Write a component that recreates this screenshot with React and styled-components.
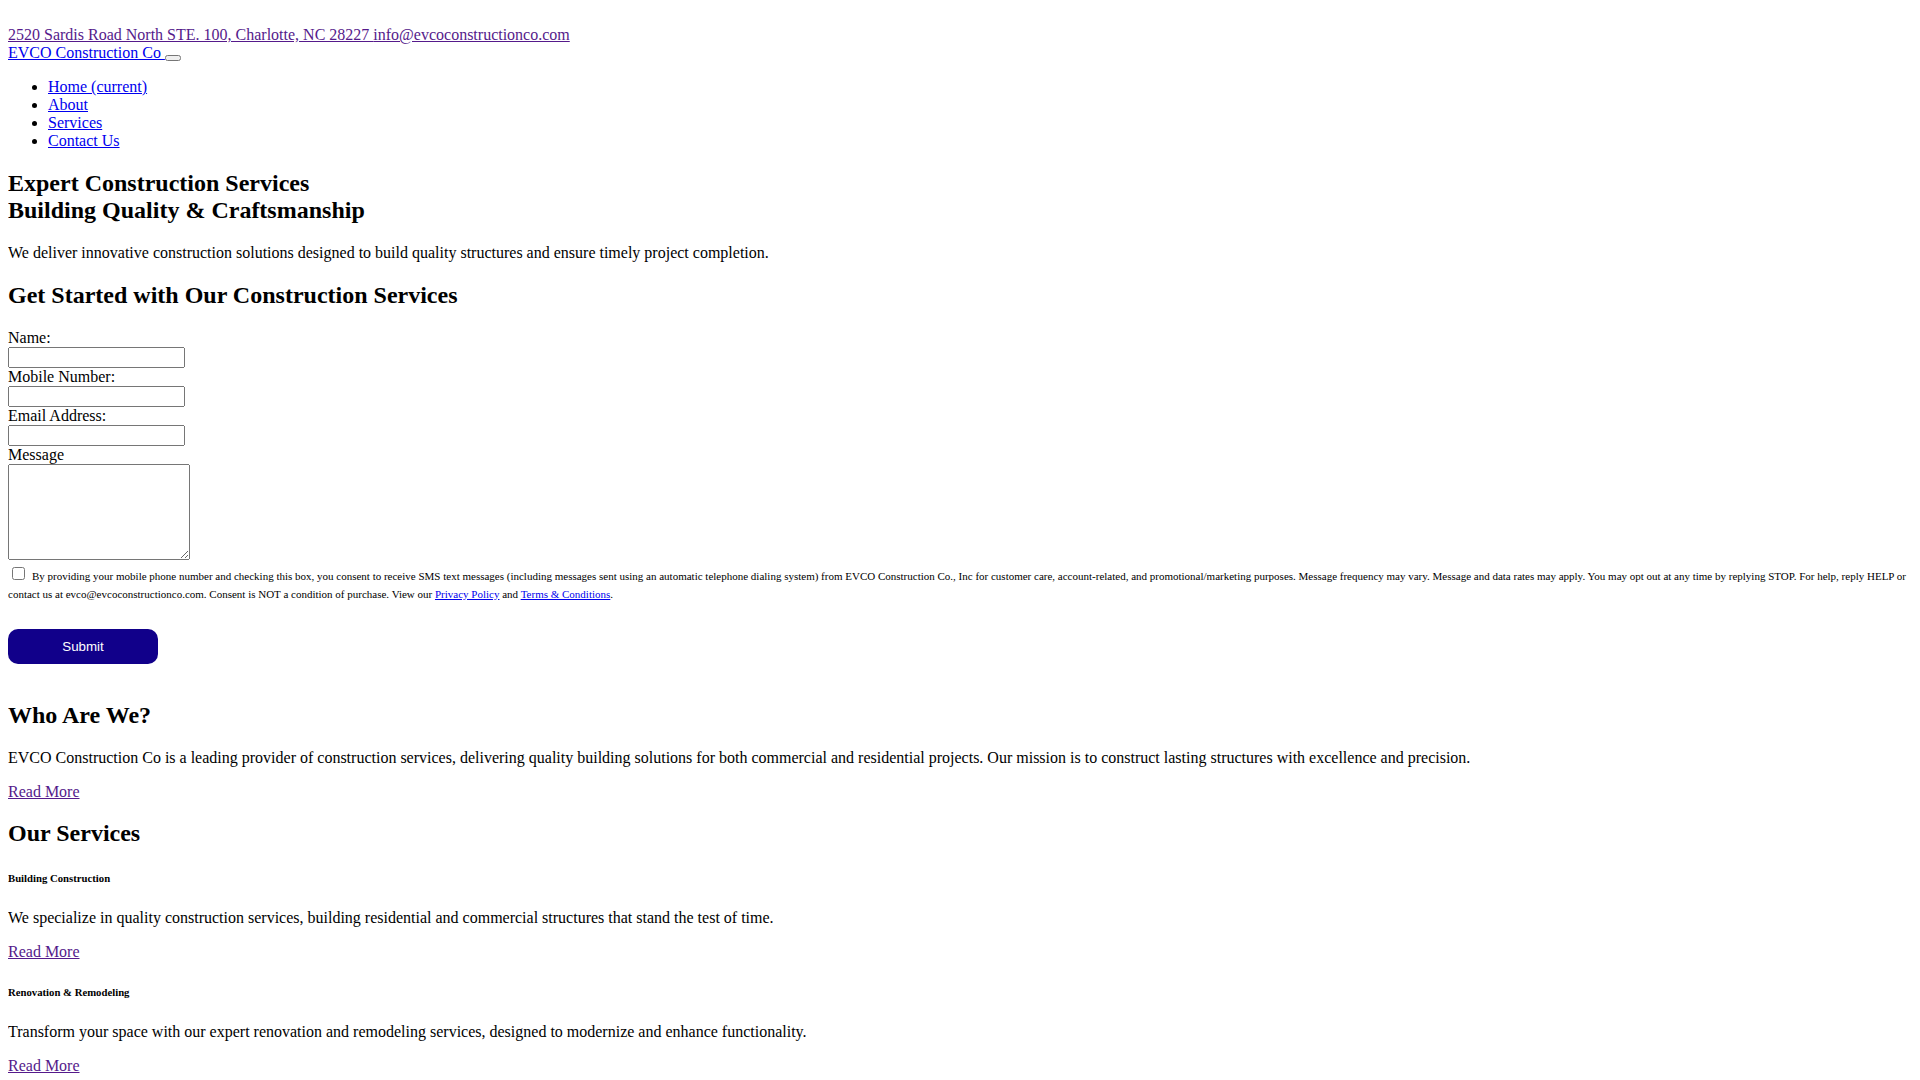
import React, { useState } from "react";
import styled, { createGlobalStyle } from "styled-components";

const navLinks = [
  { name: "Home (current)", href: "#home" },
  { name: "About", href: "#about" },
  { name: "Services", href: "#services" },
  { name: "Contact Us", href: "#contact" },
];

const fields = [
  { id: "name", label: "Name:", type: "text" },
  { id: "phone", label: "Mobile Number:", type: "tel" },
  { id: "email", label: "Email Address:", type: "email" },
];

const services = [
  {
    title: "Building Construction",
    text: "We specialize in quality construction services, building residential and commercial structures that stand the test of time.",
  },
  {
    title: "Renovation & Remodeling",
    text: "Transform your space with our expert renovation and remodeling services, designed to modernize and enhance functionality.",
  },
];

export default function App() {
  const [consent, setConsent] = useState(false);

  return (
    <>
      <GlobalStyle />
      <Header>
        <div>
          <PageLink href="#contact" $visited>
            <span>2520 Sardis Road North STE. 100, Charlotte, NC 28227 </span>
            <span>info@evcoconstructionco.com</span>
          </PageLink>
        </div>
        <nav>
          <PageLink href="#home">EVCO Construction Co </PageLink>
          <NavToggle type="button" aria-label="Toggle navigation" />
          <NavList>
            {navLinks.map((link) => (
              <li key={link.name}>
                <PageLink href={link.href}>{link.name}</PageLink>
              </li>
            ))}
          </NavList>
        </nav>
      </Header>

      <section>
        <Heading>
          Expert Construction Services
          <br />
          Building Quality &amp; Craftsmanship
        </Heading>
        <Text>
          We deliver innovative construction solutions designed to build quality
          structures and ensure timely project completion.
        </Text>
      </section>

      <section>
        <Heading>Get Started with Our Construction Services</Heading>
        <form onSubmit={(e) => e.preventDefault()}>
          {fields.map((field) => (
            <Field key={field.id}>
              <label htmlFor={field.id}>{field.label}</label>
              <TextInput id={field.id} name={field.id} type={field.type} />
            </Field>
          ))}
          <Field>
            <label htmlFor="message">Message</label>
            <MessageBox id="message" name="message" rows={6} />
          </Field>
          <Consent>
            <Checkbox
              id="consent"
              type="checkbox"
              checked={consent}
              onChange={(e) => setConsent(e.target.checked)}
            />{" "}
            <ConsentLabel htmlFor="consent">
              By providing your mobile phone number and checking this box, you
              consent to receive SMS text messages (including messages sent
              using an automatic telephone dialing system) from EVCO
              Construction Co., Inc for customer care, account-related, and
              promotional/marketing purposes. Message frequency may vary.
              Message and data rates may apply. You may opt out at any time by
              replying STOP. For help, reply HELP or contact us at
              evco@evcoconstructionco.com. Consent is NOT a condition of
              purchase. View our{" "}
              <PageLink href="#privacy">Privacy Policy</PageLink> and{" "}
              <PageLink href="#terms">Terms &amp; Conditions</PageLink>.
            </ConsentLabel>
          </Consent>
          <SubmitButton type="submit">Submit</SubmitButton>
        </form>
      </section>

      <section>
        <Heading>Who Are We?</Heading>
        <Text>
          EVCO Construction Co is a leading provider of construction services,
          delivering quality building solutions for both commercial and
          residential projects. Our mission is to construct lasting structures
          with excellence and precision.
        </Text>
        <PageLink href="#about" $visited>Read More</PageLink>
      </section>

      <section>
        <Heading>Our Services</Heading>
        {services.map((service) => (
          <div key={service.title}>
            <ServiceTitle>{service.title}</ServiceTitle>
            <Text>{service.text}</Text>
            <PageLink href="#services" $visited>Read More</PageLink>
          </div>
        ))}
      </section>
    </>
  );
}

const GlobalStyle = createGlobalStyle`
  body {
    margin: 8px;
    background: #fff;
    color: #000;
    font-family: "Liberation Serif", "Times New Roman", serif;
    font-size: 16px;
  }
`

const Header = styled.header`
  padding-top: 18px;
`

const PageLink = styled.a`
  color: ${props => props.$visited ? "#551a8b" : "#0000ee"};
  text-decoration: underline;
`

const NavToggle = styled.button`
  padding: 1px 6px;
`

const NavList = styled.ul`
  margin: 16px 0;
  padding-left: 40px;
`

/* headings keep the browser's own margins */
const Heading = styled.h2`
  font-weight: bold;
`

const Text = styled.p`
  margin: 16px 0;
`

const Field = styled.div`
  display: flex;
  flex-direction: column;
  align-items: flex-start;
`

const TextInput = styled.input`
  box-sizing: border-box;
  width: 177px;
  font-family: "Liberation Sans", Arial, sans-serif;
`

const MessageBox = styled.textarea`
  box-sizing: border-box;
  width: 182px;
  font-family: "Liberation Mono", monospace;
`

const Consent = styled.div`
  margin: 4px 0 27px;
`

const Checkbox = styled.input`
  margin: 3px 3px 3px 4px;
`

const ConsentLabel = styled.label`
  font-size: 11px;
`

const SubmitButton = styled.button`
  display: block;
  width: 150px;
  height: 35px;
  margin-bottom: 38px;
  border: none;
  border-radius: 10px;
  background: #11008a;
  color: #fff;
  font-family: "Liberation Sans", Arial, sans-serif;
`

const ServiceTitle = styled.h6`
  font-weight: bold;
`
